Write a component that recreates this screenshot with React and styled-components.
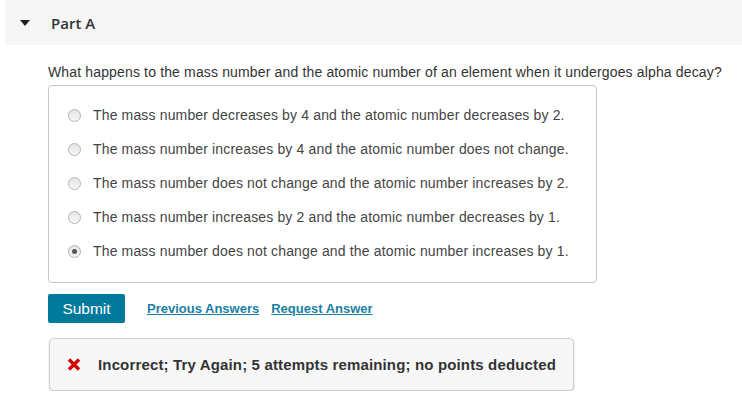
import React, { useState } from 'react';
import styled, { createGlobalStyle } from 'styled-components';

const GlobalStyle = createGlobalStyle`
  body {
    margin: 0;
    background: #fff;
    font-family: "Liberation Sans", Arial, sans-serif;
    color: #333;
  }
`

const options = [
  'The mass number decreases by 4 and the atomic number decreases by 2.',
  'The mass number increases by 4 and the atomic number does not change.',
  'The mass number does not change and the atomic number increases by 2.',
  'The mass number increases by 2 and the atomic number decreases by 1.',
  'The mass number does not change and the atomic number increases by 1.',
]

const PartHeader = styled.div`
  display: flex;
  align-items: center;
  height: 45px;
  margin-left: 5px;
  padding-left: 15px;
  background: #f6f6f6;
  font-family: "Open Sans", "Liberation Sans", sans-serif;
  font-weight: 600;
  font-size: 15px;
  color: #333;
  svg {
    margin-right: 21px;
  }
`

const Content = styled.div`
  padding-left: 48px;
  width: 549px;
`

const Question = styled.p`
  margin: 19px 0 5px;
  font-size: 14px;
  letter-spacing: 0.15px;
  line-height: 16px;
  color: #333;
  white-space: nowrap;
`

const OptionsBox = styled.div`
  border: 1px solid #c6c6c6;
  border-radius: 4px;
  padding: 12px 0 14px 19px;
`

const OptionRow = styled.label`
  display: flex;
  align-items: center;
  height: 34px;
  font-size: 14px;
  letter-spacing: 0.15px;
  color: #444;
  cursor: pointer;
  white-space: nowrap;
`

const Radio = styled.span`
  box-sizing: border-box;
  flex: none;
  width: 13px;
  height: 13px;
  margin-right: 12px;
  border-radius: 50%;
  border: 1px solid #b5b5b5;
  background: linear-gradient(#e4e4e4, #f8f8f8);
  display: flex;
  align-items: center;
  justify-content: center;
  &::after {
    content: '';
    display: ${p => (p.checked ? 'block' : 'none')};
    width: 5px;
    height: 5px;
    border-radius: 50%;
    background: #555;
  }
`

const Actions = styled.div`
  display: flex;
  align-items: center;
  margin-top: 11px;
`

const SubmitButton = styled.button`
  width: 77px;
  height: 29px;
  border: none;
  border-radius: 2px;
  background: #007a9b;
  color: #fff;
  font-family: "Liberation Sans", Arial, sans-serif;
  font-size: 15.5px;
  padding: 0;
  margin-right: 22px;
`

const ActionLink = styled.a`
  font-size: 13px;
  font-weight: bold;
  color: #1a7fa3;
  text-decoration: underline;
  margin-right: 12px;
  cursor: pointer;
`

const Feedback = styled.div`
  display: flex;
  align-items: center;
  box-sizing: border-box;
  width: 525px;
  height: 53px;
  margin: 15px 0 0 1px;
  padding-left: 17px;
  background: #f7f7f7;
  border: 1px solid #cfcfcf;
  border-radius: 5px;
  box-shadow: 0 1px 2px rgba(0, 0, 0, 0.2);
  font-size: 15px;
  letter-spacing: 0.15px;
  font-weight: bold;
  color: #333;
  white-space: nowrap;
  svg {
    margin-right: 17px;
  }
`

const Triangle = () => (
  <svg width="10" height="6" viewBox="0 0 10 6">
    <path d="M0 0 H10 L5 6 Z" fill="#222" />
  </svg>
)

const Cross = () => (
  <svg width="14" height="13" viewBox="0 0 14 13">
    <path d="M2 1.5 L12 11.5 M12 1.5 L2 11.5" stroke="#d40000" strokeWidth="3.4" strokeLinecap="butt" />
  </svg>
)

export default function App () {
  const [selected, setSelected] = useState(4)
  return (
    <>
      <GlobalStyle />
      <PartHeader>
        <Triangle />
        Part A
      </PartHeader>
      <Content>
        <Question>
          What happens to the mass number and the atomic number of an element when it undergoes alpha decay?
        </Question>
        <OptionsBox>
          {options.map((text, key) => (
            <OptionRow key={key} onClick={() => setSelected(key)}>
              <Radio checked={selected === key} />
              {text}
            </OptionRow>
          ))}
        </OptionsBox>
        <Actions>
          <SubmitButton>Submit</SubmitButton>
          <ActionLink>Previous Answers</ActionLink>
          <ActionLink>Request Answer</ActionLink>
        </Actions>
        <Feedback>
          <Cross />
          Incorrect; Try Again; 5 attempts remaining; no points deducted
        </Feedback>
      </Content>
    </>
  )
}
